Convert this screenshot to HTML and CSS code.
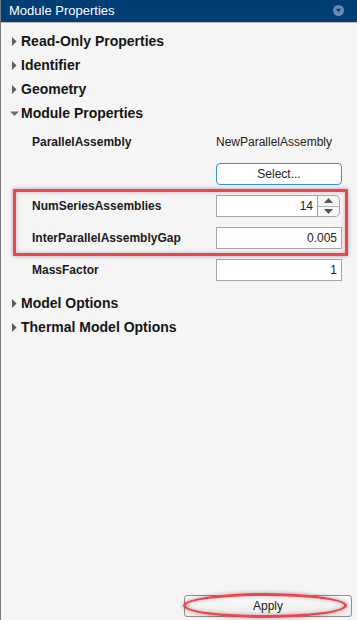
FILE: index.html
```html
<!DOCTYPE html>
<html>
<head>
<meta charset="utf-8">
<link rel="stylesheet" href="styles.css">
</head>
<body>
<div class="panel">
  <div class="header">
    <span class="title">Module Properties</span>
    <svg class="collapse" width="11" height="11" viewBox="0 0 11 11">
      <circle cx="5.5" cy="5.5" r="5.5" fill="#6b8db0"/>
      <polygon points="2.8,3.8 8.2,3.8 5.5,7.6" fill="#0c3b69"/>
    </svg>
  </div>
  <div class="content">
    <div class="section"><svg class="tri" width="9" height="9" viewBox="0 0 9 9"><polygon points="2,0 6.5,4.5 2,9" fill="#5a5a5a"/></svg><span>Read-Only Properties</span></div>
    <div class="section"><svg class="tri" width="9" height="9" viewBox="0 0 9 9"><polygon points="2,0 6.5,4.5 2,9" fill="#5a5a5a"/></svg><span>Identifier</span></div>
    <div class="section"><svg class="tri" width="9" height="9" viewBox="0 0 9 9"><polygon points="2,0 6.5,4.5 2,9" fill="#5a5a5a"/></svg><span>Geometry</span></div>
    <div class="section"><svg class="tri" width="9" height="9" viewBox="0 0 9 9"><polygon points="0,2.5 9,2.5 4.5,7" fill="#6a6a6a"/></svg><span>Module Properties</span></div>
    <div class="props">
      <div class="row">
        <span class="label">ParallelAssembly</span>
        <span class="value">NewParallelAssembly</span>
      </div>
      <div class="row">
        <span class="label"></span>
        <button class="select">Select...</button>
      </div>
      <div class="row">
        <span class="label">NumSeriesAssemblies</span>
        <div class="spin">
          <div class="field spinfield">14</div>
          <div class="spinbtns">
            <div class="sb"><svg width="9" height="5" viewBox="0 0 9 5"><polygon points="0,5 9,5 4.5,0" fill="#555"/></svg></div>
            <div class="sb"><svg width="9" height="5" viewBox="0 0 9 5"><polygon points="0,0 9,0 4.5,5" fill="#555"/></svg></div>
          </div>
        </div>
      </div>
      <div class="row">
        <span class="label">InterParallelAssemblyGap</span>
        <div class="field">0.005</div>
      </div>
      <div class="row">
        <span class="label">MassFactor</span>
        <div class="field">1</div>
      </div>
    </div>
    <div class="section"><svg class="tri" width="9" height="9" viewBox="0 0 9 9"><polygon points="2,0 6.5,4.5 2,9" fill="#5a5a5a"/></svg><span>Model Options</span></div>
    <div class="section"><svg class="tri" width="9" height="9" viewBox="0 0 9 9"><polygon points="2,0 6.5,4.5 2,9" fill="#5a5a5a"/></svg><span>Thermal Model Options</span></div>
  </div>
  <div class="footer">
    <button class="apply">Apply</button>
  </div>
  <div class="annot-box"></div>
  <div class="annot-ellipse"></div>
</div>
</body>
</html>
```

FILE: styles.css
```css
* { box-sizing: border-box; }
html, body { margin: 0; padding: 0; }
body {
  width: 357px;
  height: 620px;
  overflow: hidden;
  background: #f5f5f5;
  font-family: "Liberation Sans", Arial, sans-serif;
  color: #1a1a1a;
}
.panel {
  position: relative;
  width: 357px;
  height: 620px;
  display: flex;
  flex-direction: column;
  border-left: 1px solid #7a7a7a;
  background: #f5f5f5;
}
.header {
  height: 23px;
  flex: none;
  background: #003e73;
  border-bottom: 1px solid #b9b9b9;
  display: flex;
  align-items: center;
  justify-content: space-between;
  padding: 0 13px 1px 8px;
}
.title {
  color: #ffffff;
  font-size: 13px;
}
.collapse { display: block; }
.content {
  padding-top: 6px;
  display: flex;
  flex-direction: column;
}
.section {
  height: 24px;
  display: flex;
  align-items: center;
  padding-left: 9px;
  font-size: 14px;
  font-weight: bold;
  color: #151515;
}
.tri {
  display: block;
  margin-right: 2px;
  flex: none;
}
.props {
  padding: 6px 15px 10px 31px;
  display: flex;
  flex-direction: column;
  gap: 10px;
}
.row {
  height: 22px;
  display: grid;
  grid-template-columns: 1fr 126px;
  align-items: center;
  font-size: 12px;
}
.label {
  font-weight: bold;
  color: #1a1a1a;
}
.value {
  color: #222;
}
.select {
  height: 22px;
  width: 126px;
  margin: 0;
  padding: 0;
  border: 1px solid #3d8edb;
  border-radius: 4px;
  background: #ffffff;
  font-family: "Liberation Sans", Arial, sans-serif;
  font-size: 12px;
  color: #222;
}
.field {
  height: 22px;
  background: #ffffff;
  border: 1px solid #a6a6a6;
  display: flex;
  align-items: center;
  justify-content: flex-end;
  padding-right: 4px;
  font-size: 12px;
  color: #222;
}
.spin {
  display: flex;
  height: 22px;
  width: 124px;
}
.spinfield {
  width: 102px;
  flex: none;
}
.spinbtns {
  width: 22px;
  flex: none;
  display: flex;
  flex-direction: column;
  border: 1px solid #a6a6a6;
  border-left: none;
  border-radius: 0 5px 5px 0;
  background: #f7f7f7;
}
.sb {
  flex: 1;
  display: flex;
  align-items: center;
  justify-content: center;
}
.sb + .sb { border-top: 1px solid #b5b5b5; }
.sb svg { display: block; }
.footer {
  margin-top: auto;
  display: flex;
  justify-content: flex-end;
  padding: 0 5px 3px 0;
}
.apply {
  width: 168px;
  height: 22px;
  margin: 0;
  padding: 0;
  border: 1px solid #8f8f8f;
  border-radius: 3px;
  background: linear-gradient(#fbfbfb, #ececec);
  font-family: "Liberation Sans", Arial, sans-serif;
  font-size: 12px;
  color: #1a1a1a;
}
.annot-box {
  position: absolute;
  left: 12px;
  top: 189px;
  width: 335px;
  height: 67px;
  border: 3px solid #f1434c;
  box-shadow: 0 0 4px rgba(0,0,0,0.35), inset 0 0 4px rgba(0,0,0,0.25);
}
.annot-ellipse {
  position: absolute;
  left: 182px;
  top: 593px;
  width: 164px;
  height: 25px;
  border: 3px solid #f1434c;
  border-radius: 50%;
  box-shadow: 0 0 4px rgba(0,0,0,0.35), inset 0 0 4px rgba(0,0,0,0.25);
}
```
